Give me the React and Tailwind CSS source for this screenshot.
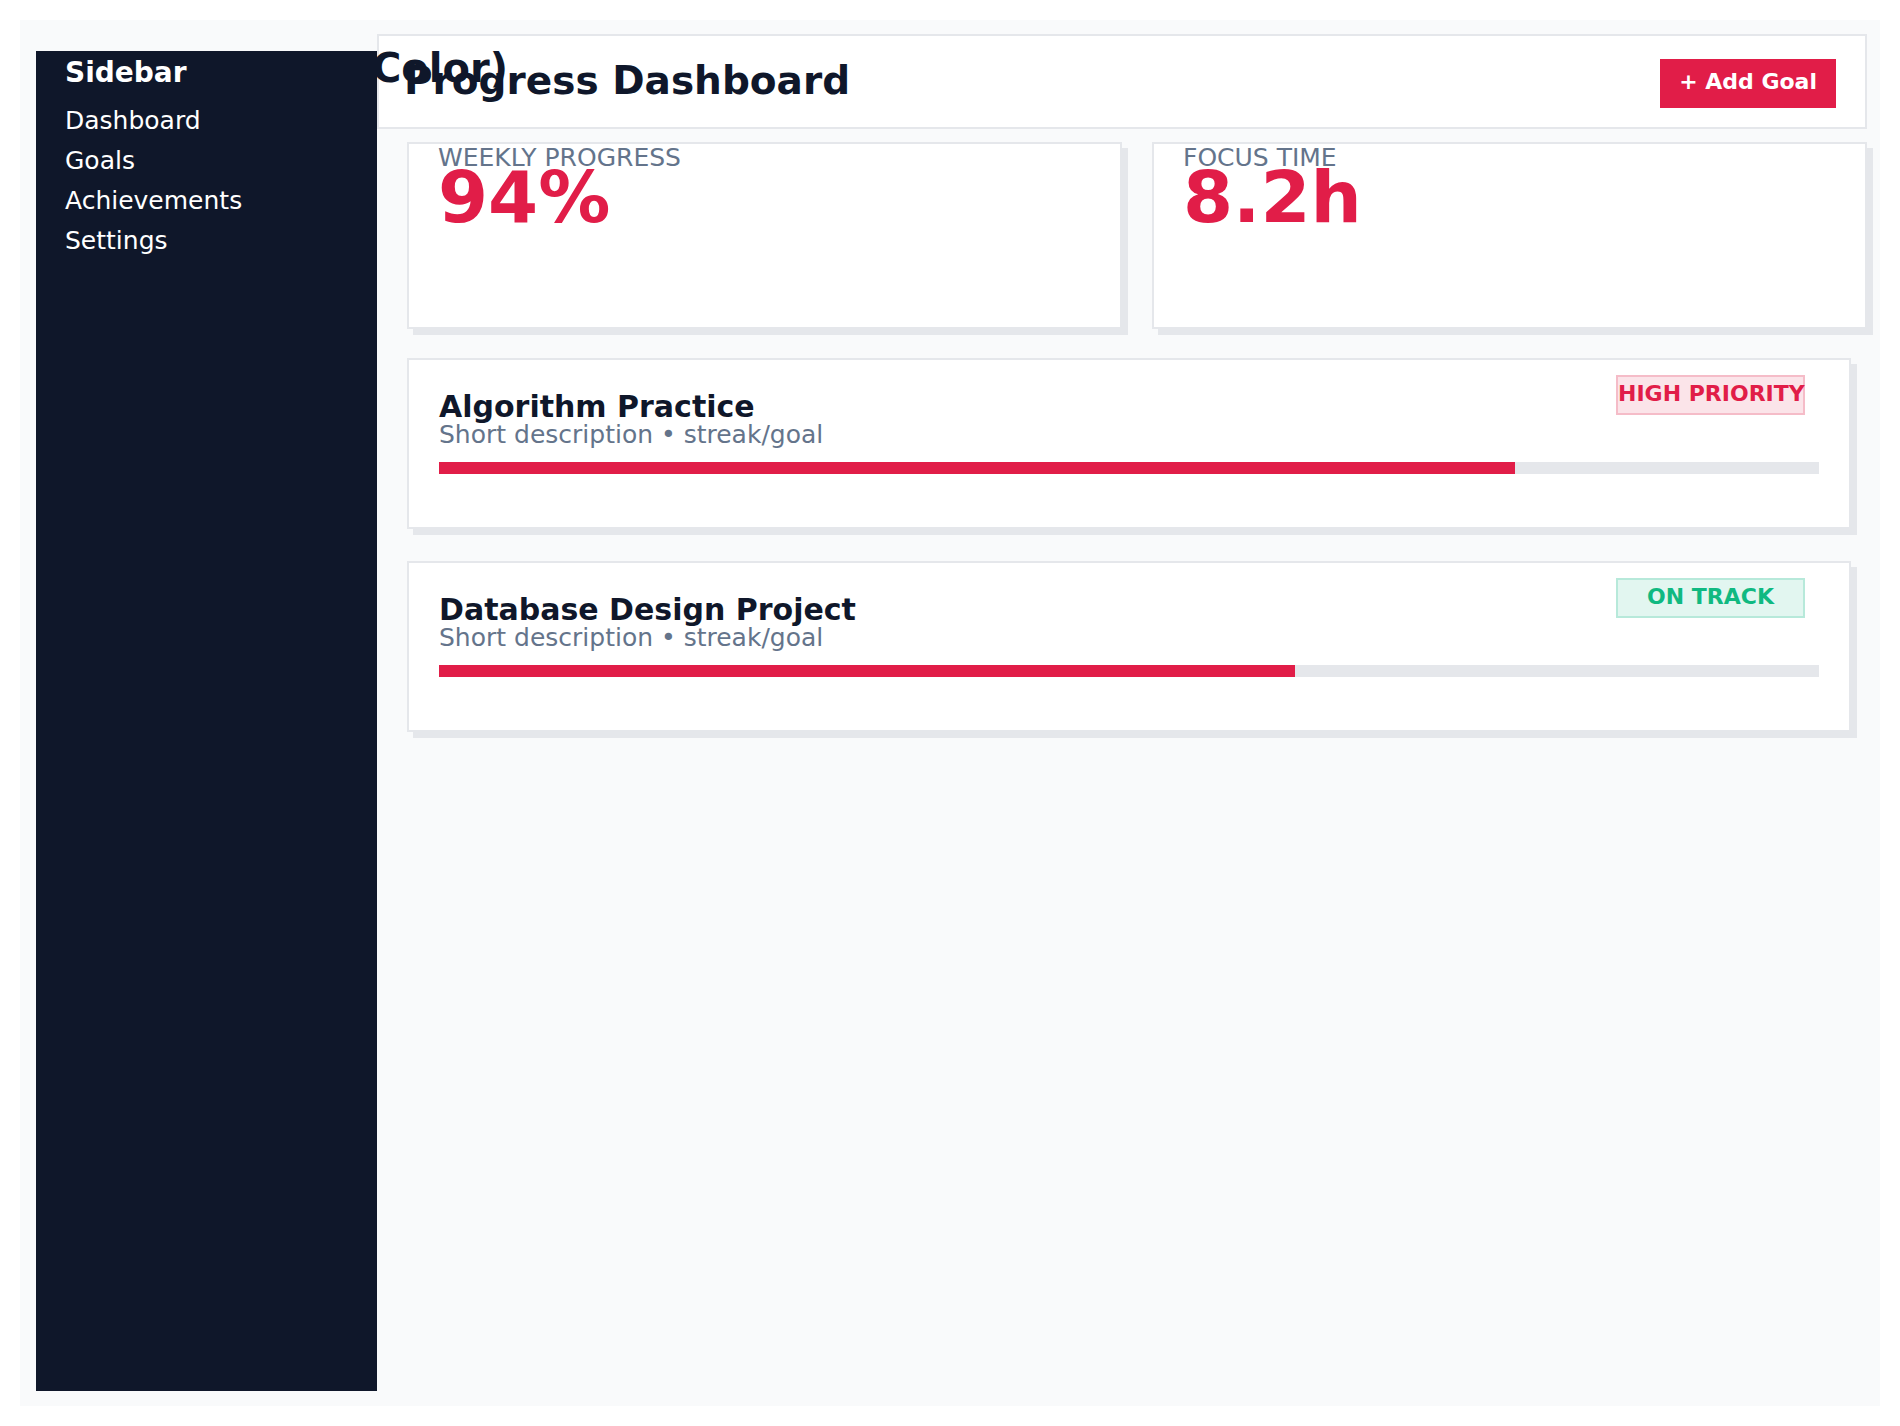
const goals = [
  { title: 'Algorithm Practice', desc: 'Short description • streak/goal', pct: 78, badge: 'HIGH PRIORITY', tone: 'rose' },
  { title: 'Database Design Project', desc: 'Short description • streak/goal', pct: 62, badge: 'ON TRACK', tone: 'emerald' },
];

const badgeTone = {
  rose: 'bg-[#e11d48]/12 border-[#e11d48]/20 text-[#e11d48]',
  emerald: 'bg-[#10b981]/12 border-[#10b981]/20 text-[#10b981]',
};

const nav = ['Dashboard', 'Goals', 'Achievements', 'Settings'];

function StatCard({ label, value }) {
  return (
    <div className="h-[187px] border-2 border-[#e5e7eb] bg-white px-[29px] pt-[3px] shadow-[6px_6px_0_#e5e7eb]">
      <div className="text-[25px] leading-[22px] uppercase text-[#64748b]">{label}</div>
      <div className="text-[72px] font-bold leading-[56px] text-[#e11d48]">{value}</div>
    </div>
  );
}

function GoalCard({ g }) {
  return (
    <div className="relative border-2 border-[#e5e7eb] bg-white px-[30px] pt-[31px] pb-[53px] shadow-[6px_6px_0_#e5e7eb]">
      <span className={`absolute right-[44px] top-[15px] h-10 w-[189px] whitespace-nowrap border-2 text-center text-[22px] font-bold leading-[33px] ${badgeTone[g.tone]}`}>
        {g.badge}
      </span>
      <h3 className="text-[30px] font-bold leading-[32px] text-[#0f172a]">{g.title}</h3>
      <p className="text-[25px] leading-[24px] text-[#64748b]">{g.desc}</p>
      <div className="mt-[15px] h-[12px] bg-[#e5e7eb]">
        <div className="h-full bg-[#e11d48]" style={{ width: `${g.pct}%` }} />
      </div>
    </div>
  );
}

export default function App() {
  return (
    <div className="bg-white p-5 font-['DejaVu_Sans',sans-serif]">
      <div className="relative flex h-[1386px] bg-[#f9fafb] pl-4 pr-[13px] pt-[14px] pb-[15px]">
        {/* page heading that ends up under the sidebar */}
        <h1 className="absolute right-[1372px] top-[26px] z-10 whitespace-nowrap text-[40px] font-bold leading-[44px] text-[#0f172a]">
          Theme (Rose Color)
        </h1>

        {/* Sidebar */}
        <aside className="relative z-20 mt-[17px] w-[341px] shrink-0 bg-[#0f172a] px-[29px] pt-[5px] text-white">
          <div className="text-[28px] font-bold leading-[34px]">Sidebar</div>
          <ul className="mt-[11px]">
            {nav.map(n => (
              <li key={n} className="text-[25px] leading-[40px]">{n}</li>
            ))}
          </ul>
        </aside>

        {/* Main */}
        <main className="flex-1">
          <header className="flex h-[95px] items-start justify-between border-2 border-[#e5e7eb] bg-white pl-[25px] pr-[29px] pt-[23px]">
            <h2 className="text-[39px] font-bold leading-[44px] text-[#0f172a]">Progress Dashboard</h2>
            <button className="flex h-[49px] items-center bg-[#e11d48] px-[19px] pb-[3px] text-[22px] font-bold leading-none text-white">
              + Add Goal
            </button>
          </header>

          <div className="ml-[30px] mt-[13px] grid grid-cols-2 gap-[30px]">
            <StatCard label="Weekly Progress" value="94%" />
            <StatCard label="Focus Time" value="8.2h" />
          </div>

          <div className="ml-[30px] mr-[16px] mt-[29px] flex flex-col gap-[32px]">
            {goals.map(g => <GoalCard key={g.title} g={g} />)}
          </div>
        </main>
      </div>
    </div>
  );
}
